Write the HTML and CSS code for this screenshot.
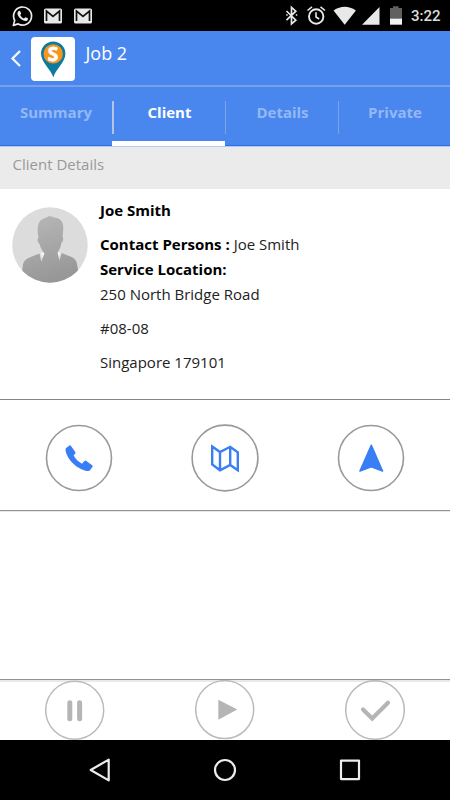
FILE: index.html
```html
<!DOCTYPE html>
<html lang="en">
<head>
<meta charset="utf-8">
<title>Job 2</title>
<link rel="stylesheet" href="styles.css">
</head>
<body>
<div class="screen">
  <div class="status">
    <svg class="status-left" width="100" height="31" viewBox="0 0 100 31">
      <path d="M13.4 25.4 14.7 20.4A9 9 0 1 1 18.2 23.9Z" fill="none" stroke="#ececec" stroke-width="1.7" stroke-linejoin="round"/>
      <path d="M18.2 11.4c.8-.9 1.8-.8 2.1 0l.8 1.9c.2.6-.9 1.4-.8 1.9.8 1.6 2 2.7 3.6 3.2.5.2 1.2-1.4 1.8-1.1l2 .9c.7.4.1 2-.8 2.5-1.7.9-4.500-.3-6.500-2.200-2.300-2.200-4-5.400-2.200-7.100Z" fill="#ececec"/>
      <rect x="44" y="8.500" width="18" height="15" rx="1.500" fill="#e8e8e8"/>
      <path d="M46.500 21V11L53 16.300l6.500-5.300V21" fill="none" stroke="#111" stroke-width="1.700"/>
      <rect x="74" y="8.500" width="18" height="15" rx="1.500" fill="#e8e8e8"/>
      <path d="M76.500 21V11L83 16.300l6.500-5.300V21" fill="none" stroke="#111" stroke-width="1.700"/>
    </svg>
    <div class="status-right">
      <svg width="124" height="31" viewBox="280 0 124 31">
        <path d="m286.500 11 9.300 9.100-4.300 3.800V7.300l4.300 3.900-9.300 9" fill="none" stroke="#e8e8e8" stroke-width="1.700"/>
        <path d="M286.200 15h1.500M295.800 15h1.500" stroke="#e8e8e8" stroke-width="1.500"/>
        <circle cx="316.200" cy="16.500" r="7.200" fill="none" stroke="#e8e8e8" stroke-width="1.900"/>
        <path d="M316 12.300v4.700l3.200 2M307.500 10.500l4.500-3.600M320.500 6.900l4.500 3.600" fill="none" stroke="#e8e8e8" stroke-width="1.600"/>
        <path d="M333.500 10.500q11.200-7.500 22.400 0L344.700 24.700Z" fill="#e8e8e8"/>
        <path d="M379.500 7v17.700H362Z" fill="#e8e8e8"/>
        <path d="M390 8h3V6.200h5.500V8h3.500v11h-12Z" fill="#606060"/>
        <path d="M390 18.700h12v6h-12Z" fill="#f3f3f3"/>
      </svg>
      <span class="clock">3:22</span>
    </div>
  </div>

  <header class="header">
    <svg class="back" width="12" height="18" viewBox="0 0 12 18"><path d="M10 2 2.500 9.500l7.500 7.500" fill="none" stroke="#f4f8ff" stroke-width="2.300"/></svg>
    <div class="logo">
      <svg width="44" height="44" viewBox="0 0 44 44">
        <path d="M22.300 40.500C20.500 33 10 25 10 16.700a12.200 12.200 0 0 1 24.400 0C34.400 25 24 33 22.300 40.500Z" fill="#0c7ba0"/>
        <circle cx="22.200" cy="16.900" r="9.700" fill="#f7941d"/>
        <text class="mark" x="22" y="23.800" text-anchor="middle">S</text>
      </svg>
    </div>
    <h1 class="title">Job 2</h1>
  </header>

  <nav class="tabs">
    <div class="tab">Summary</div>
    <div class="tab active">Client</div>
    <div class="tab">Details</div>
    <div class="tab">Private</div>
  </nav>

  <div class="section">Client Details</div>

  <main class="client">
    <svg class="avatar" width="76" height="76" viewBox="0 0 76 76">
      <defs>
        <clipPath id="face"><circle cx="38" cy="38" r="37.700"/></clipPath>
        <linearGradient id="shade" x1="0" y1="0" x2="0.300" y2="1"><stop offset="0" stop-color="#b9b9b9"/><stop offset="1" stop-color="#979797"/></linearGradient>
      </defs>
      <circle cx="38" cy="38" r="37.700" fill="#dcdcdc"/>
      <g clip-path="url(#face)">
        <path d="M28.500 45.500 32 56H45l3.500-10.500Z" fill="#f4f4f4"/>
        <path d="M26.500 30c-1.200-5-1.500-13 2-16.500 2-2.200 5.500-2.500 9-4.800l.8 1.300 1.200-1.200 1.200 1.500c6.500.3 10.200 3.500 10.500 9 .2 4-.3 7.500-.7 10.200 1.500 1 .5 5.500-1.200 6.500-.5 4-1.700 6.500-3.800 9.500l2 8 2.200-7.500c5.500 3 13.300 3.500 15 9.500l4 22H8l3-20c1.500-7 9-7.500 16.500-11l1.700 8 3.300-8c-1.500-2-4.300-5.500-4.800-9.500-2-.5-2.700-5.200-1.200-7Z" fill="url(#shade)"/>
      </g>
    </svg>
    <div class="details">
      <p class="name"><b>Joe Smith</b></p>
      <p><b>Contact Persons :</b> Joe Smith</p>
      <p><b>Service Location:</b></p>
      <p class="address">250 North Bridge Road</p>
      <p class="address">#08-08</p>
      <p>Singapore 179101</p>
    </div>
  </main>

  <div class="actions">
    <svg width="68" height="68" viewBox="0 0 68 68">
      <circle cx="34" cy="34" r="32.500" fill="none" stroke="#999" stroke-width="1.600"/>
      <path d="M21.200 24 24.400 21.600q.9-.6 1.600.3L30.300 27.900q.5.800 0 1.500L28.600 31.600C30.500 35 33.500 38 37 39.700L39.500 37q.7-.7 1.500-.2L47.200 41.200q.9.700.4 1.500L45 46.300q-.6.800-1.600.8C34 46.500 22 36.500 20.500 26Q20.400 24.700 21.200 24Z" fill="#387ef5"/>
    </svg>
    <svg width="68" height="68" viewBox="0 0 68 68">
      <circle cx="34" cy="34" r="32.900" fill="none" stroke="#999" stroke-width="1.600"/>
      <path d="M21.200 22.500 29 28l10.200-5.200 7.600 5.500v18L39.200 41 29 46.300l-7.800-5.800ZM29 28v18.300M39.200 22.800V41" fill="none" stroke="#387ef5" stroke-width="2.400"/>
    </svg>
    <svg width="68" height="68" viewBox="0 0 68 68">
      <circle cx="34" cy="34" r="32.500" fill="none" stroke="#999" stroke-width="1.600"/>
      <path d="M34.300 21.300 45.500 47 34.300 42.800 23 47Z" fill="#387ef5" stroke="#387ef5" stroke-width="1.600" stroke-linejoin="round"/>
    </svg>
  </div>

  <div class="space"></div>

  <footer class="controls">
    <svg width="60" height="60" viewBox="0 0 60 60">
      <circle cx="29.700" cy="30.200" r="29" fill="none" stroke="#bbb" stroke-width="1.500"/>
      <path d="M24.800 22.700v16.100M34.600 22.700v16.100" stroke="#b5b5b5" stroke-width="5" stroke-linecap="round"/>
    </svg>
    <svg width="60" height="60" viewBox="0 0 60 60">
      <circle cx="29.700" cy="29.600" r="29" fill="none" stroke="#bbb" stroke-width="1.500"/>
      <path d="M23.300 19.800 42.300 29.600 23.300 39.800Z" fill="#b5b5b5"/>
    </svg>
    <svg width="60" height="60" viewBox="0 0 60 60">
      <circle cx="30" cy="30" r="29.300" fill="none" stroke="#bbb" stroke-width="1.500"/>
      <path d="M18 29.500 27.200 38.500 43 22.700" fill="none" stroke="#b5b5b5" stroke-width="4.200" stroke-linecap="round"/>
    </svg>
  </footer>

  <div class="navbar">
    <svg width="450" height="60" viewBox="0 0 450 60" fill="none" stroke="#ececec" stroke-width="2.200" stroke-linejoin="round">
      <path d="M108.700 19.600V40.400L90.700 30Z"/>
      <circle cx="225" cy="30" r="10"/>
      <rect x="341" y="20.600" width="18" height="18.500"/>
    </svg>
  </div>
</div>
</body>
</html>
```
FILE: styles.css
```css
* { box-sizing: border-box; }
body {
  margin: 0;
  background: #fff;
  font-family: "Open Sans", "Noto Sans", sans-serif;
  color: #222;
}
h1, p { margin: 0; }
svg { display: block; flex: none; }
.screen {
  width: 450px;
  height: 800px;
  display: flex;
  flex-direction: column;
  overflow: hidden;
}
.screen > * { flex: none; }
.status {
  height: 31px;
  background: #000;
  display: flex;
  justify-content: space-between;
}
.status-right { display: flex; width: 170px; }
.clock {
  font: 500 15px/33px Roboto, sans-serif;
  color: #dcdcdc;
  margin-left: 7px;
}
.header {
  height: 56px;
  background: #4987ef;
  border-bottom: 2px solid #779fec;
  display: flex;
  align-items: center;
  padding: 0 0 0 10px;
}
.logo {
  width: 44px;
  height: 44px;
  margin: 2px 0 0 9px;
  background: #fff;
  border-radius: 4px;
}
.mark { font: 700 19px "Open Sans", sans-serif; fill: #fff; stroke: #fff; stroke-width: .8px; }
.title {
  font-size: 18px;
  font-weight: 400;
  line-height: 26px;
  color: #fff;
  margin: 0 0 10px 10.500px;
}
.tabs {
  height: 60px;
  display: grid;
  grid-template-columns: 112px 113px 113px 112px;
  background: linear-gradient(#4987ef 58px, #2871e7 58px, #2871e7 59px, #b3caf2 59px);
}
.tab {
  height: 59px;
  padding: 13px 0 0 2px;
  text-align: center;
  font-size: 15px;
  font-weight: 700;
  line-height: 24px;
  color: #94b8f5;
  background: linear-gradient(#7da4e8, #7da4e8) 0 14px / 1px 33px no-repeat;
}
.tab:first-child { background: none; padding-left: 0; }
.tab.active {
  color: #fff;
  border-bottom: 5px solid #fff;
  background: linear-gradient(#b2c3e4, #b2c3e4) 0 14px / 2px 33px no-repeat;
}
.section {
  height: 42px;
  padding: 6px 12.500px;
  background: #ebebeb;
  font-size: 15px;
  line-height: 23px;
  color: #999;
}
.client {
  height: 211px;
  display: flex;
  align-items: flex-start;
  padding: 9px 12px 0;
  border-bottom: 1px solid #858585;
}
.avatar { margin-top: 9px; }
.details {
  margin-left: 12px;
  font-size: 15px;
  line-height: 25px;
}
.details b { color: #000; }
.name, .address { margin-bottom: 9px; }
.actions {
  height: 111px;
  display: grid;
  grid-template-columns: repeat(3, 145.7px);
  justify-content: center;
  justify-items: center;
  padding-top: 24px;
  border-bottom: 1px solid #929292;
}
.space {
  height: 169px;
  border-top: 1px solid #e8e8e8;
  border-bottom: 1px solid #929292;
}
.controls {
  height: 60px;
  display: grid;
  grid-template-columns: repeat(3, 150px);
  justify-items: center;
  background: linear-gradient(#e9e9e9 2px, #fff 2px);
}
.navbar { height: 60px; background: #000; }
```
